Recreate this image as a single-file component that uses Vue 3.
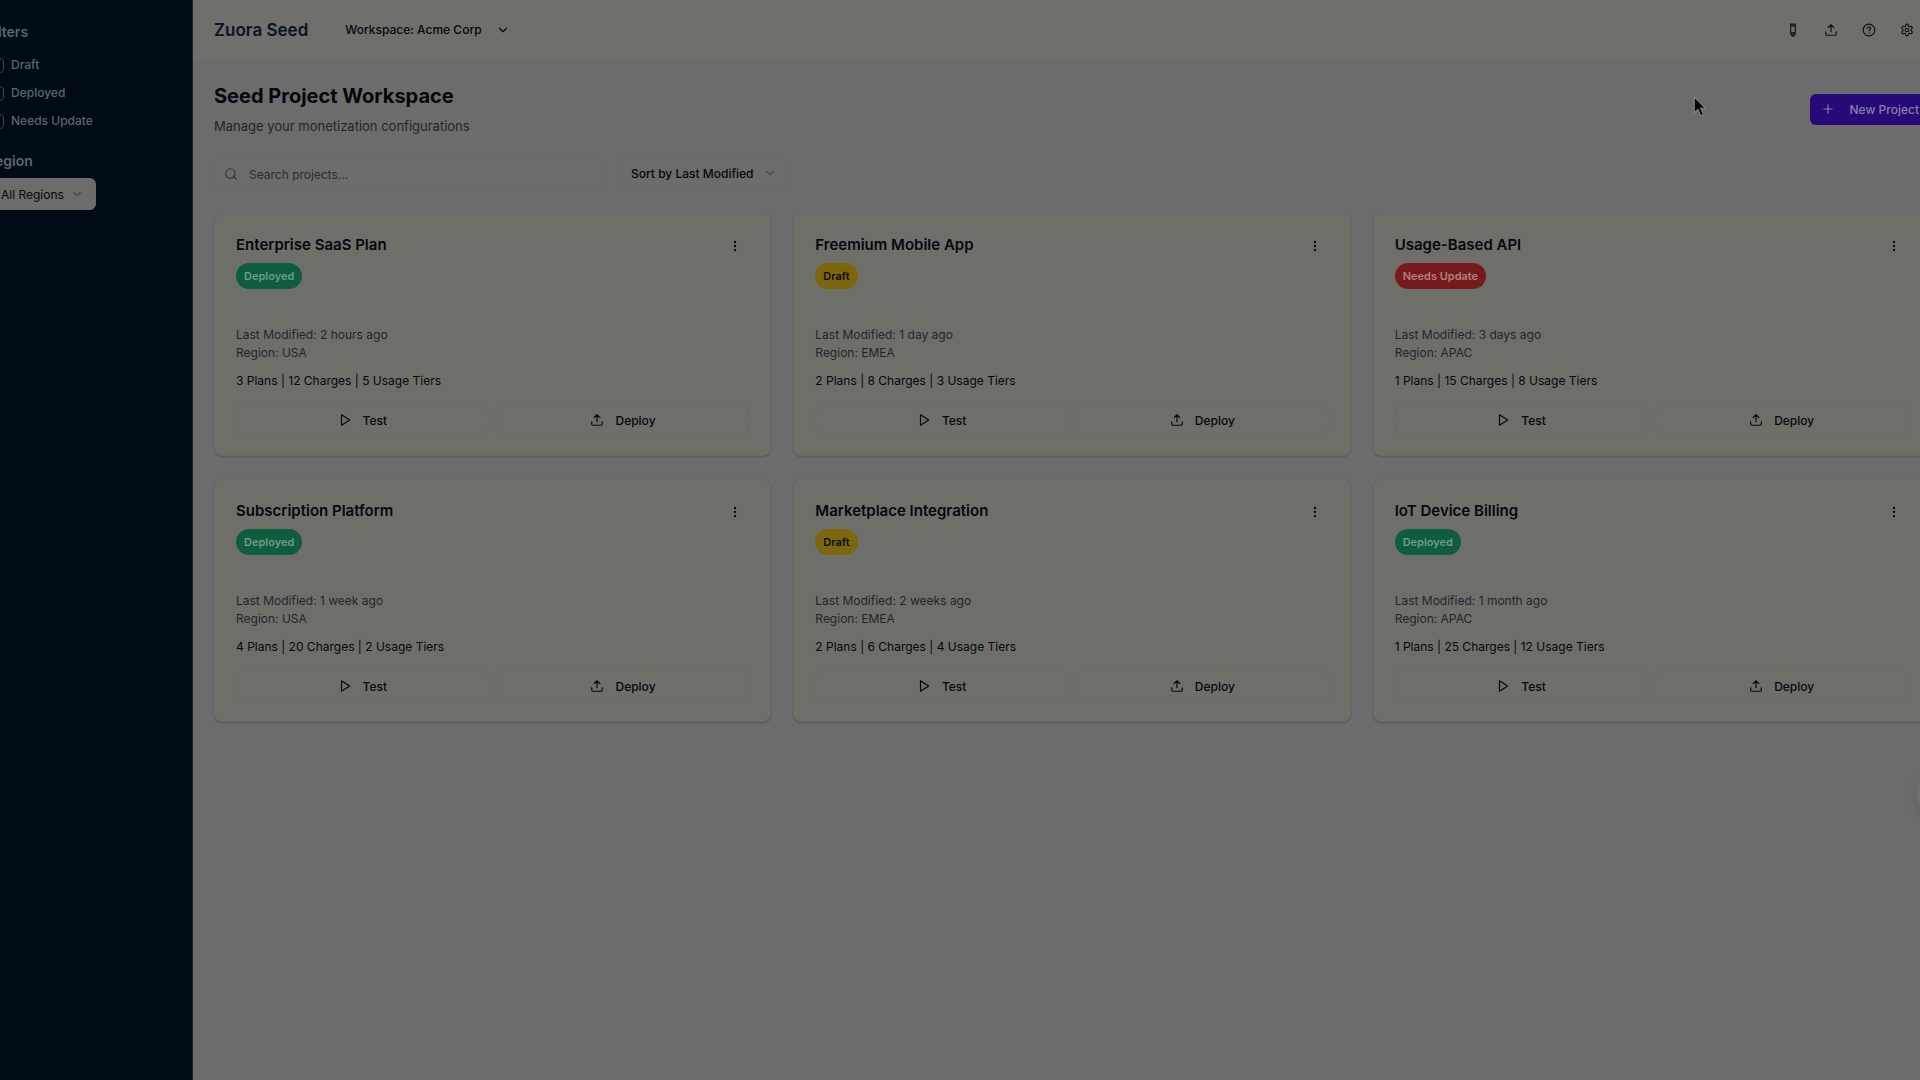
<script setup>
import { ref, computed } from "vue";

const statuses = ["Draft", "Deployed", "Needs Update"];
const checked = ref([]);
const region = ref("All Regions");
const sort = ref("Sort by Last Modified");
const search = ref("");

const projects = [
  { name: "Enterprise SaaS Plan", status: "Deployed", modified: "2 hours ago", region: "USA", plans: 3, charges: 12, tiers: 5 },
  { name: "Freemium Mobile App", status: "Draft", modified: "1 day ago", region: "EMEA", plans: 2, charges: 8, tiers: 3 },
  { name: "Usage-Based API", status: "Needs Update", modified: "3 days ago", region: "APAC", plans: 1, charges: 15, tiers: 8 },
  { name: "Subscription Platform", status: "Deployed", modified: "1 week ago", region: "USA", plans: 4, charges: 20, tiers: 2 },
  { name: "Marketplace Integration", status: "Draft", modified: "2 weeks ago", region: "EMEA", plans: 2, charges: 6, tiers: 4 },
  { name: "IoT Device Billing", status: "Deployed", modified: "1 month ago", region: "APAC", plans: 1, charges: 25, tiers: 12 },
];

const visible = computed(() =>
  projects.filter(
    (p) =>
      (!checked.value.length || checked.value.includes(p.status)) &&
      (region.value === "All Regions" || p.region === region.value) &&
      p.name.toLowerCase().includes(search.value.toLowerCase()),
  ),
);

const badgeClass = (status) => status.toLowerCase().replace(" ", "-");
</script>

<template>
  <div class="viewport">
    <div class="shell">
      <aside class="sidebar">
        <h2>Filters</h2>
        <div class="checks">
          <label v-for="s in statuses" :key="s">
            <input v-model="checked" type="checkbox" :value="s" />
            {{ s }}
          </label>
        </div>
        <label class="region-label" for="region">Region</label>
        <div class="select region-select">
          <select id="region" v-model="region">
            <option>All Regions</option>
            <option>USA</option>
            <option>EMEA</option>
            <option>APAC</option>
          </select>
          <svg class="icon chevron" viewBox="0 0 24 24"><path d="m6 9 6 6 6-6" /></svg>
        </div>
      </aside>

      <div class="main">
        <header class="topbar">
          <span class="brand">Zuora Seed</span>
          <button class="workspace">
            Workspace: Acme Corp
            <svg class="icon" viewBox="0 0 24 24"><path d="m6 9 6 6 6-6" /></svg>
          </button>
          <nav class="tools">
            <button aria-label="Edit">
              <svg class="icon" viewBox="0 0 24 24">
                <path d="M8 2h8v16l-2 4h-4l-2-4zM8 5h8M8 17h8M12 18v3" />
              </svg>
            </button>
            <button aria-label="Upload">
              <svg class="icon" viewBox="0 0 24 24">
                <path d="M21 15v4a2 2 0 0 1-2 2H5a2 2 0 0 1-2-2v-4M17 8l-5-5-5 5M12 3v12" />
              </svg>
            </button>
            <button aria-label="Help">
              <svg class="icon" viewBox="0 0 24 24">
                <circle cx="12" cy="12" r="10" />
                <path d="M9.1 9a3 3 0 0 1 5.8 1c0 2-3 3-3 3M12 17h.01" />
              </svg>
            </button>
            <button aria-label="Settings">
              <svg class="icon" viewBox="0 0 24 24">
                <path
                  d="M12.22 2h-.44a2 2 0 0 0-2 2v.18a2 2 0 0 1-1 1.73l-.43.25a2 2 0 0 1-2 0l-.15-.08a2 2 0 0 0-2.73.73l-.22.38a2 2 0 0 0 .73 2.73l.15.1a2 2 0 0 1 1 1.72v.51a2 2 0 0 1-1 1.74l-.15.09a2 2 0 0 0-.73 2.73l.22.38a2 2 0 0 0 2.73.73l.15-.08a2 2 0 0 1 2 0l.43.25a2 2 0 0 1 1 1.73V20a2 2 0 0 0 2 2h.44a2 2 0 0 0 2-2v-.18a2 2 0 0 1 1-1.73l.43-.25a2 2 0 0 1 2 0l.15.08a2 2 0 0 0 2.73-.73l.22-.39a2 2 0 0 0-.73-2.73l-.15-.08a2 2 0 0 1-1-1.74v-.5a2 2 0 0 1 1-1.74l.15-.09a2 2 0 0 0 .73-2.73l-.22-.38a2 2 0 0 0-2.73-.73l-.15.08a2 2 0 0 1-2 0l-.43-.25a2 2 0 0 1-1-1.73V4a2 2 0 0 0-2-2z"
                />
                <circle cx="12" cy="12" r="3" />
              </svg>
            </button>
          </nav>
        </header>

        <main class="content">
          <div class="page-head">
            <div>
              <h1>Seed Project Workspace</h1>
              <p>Manage your monetization configurations</p>
            </div>
            <button class="primary">
              <svg class="icon" viewBox="0 0 24 24"><path d="M5 12h14M12 5v14" /></svg>
              New Project
            </button>
          </div>

          <div class="controls">
            <div class="search">
              <svg class="icon" viewBox="0 0 24 24">
                <circle cx="11" cy="11" r="8" />
                <path d="m21 21-4.3-4.3" />
              </svg>
              <input v-model="search" type="text" placeholder="Search projects..." aria-label="Search projects" />
            </div>
            <div class="select sort-select">
              <select v-model="sort" aria-label="Sort projects">
                <option>Sort by Last Modified</option>
                <option>Sort by Name</option>
              </select>
              <svg class="icon chevron" viewBox="0 0 24 24"><path d="m6 9 6 6 6-6" /></svg>
            </div>
          </div>

          <div class="grid">
            <article v-for="p in visible" :key="p.name" class="card">
              <div class="card-head">
                <div>
                  <h3>{{ p.name }}</h3>
                  <span class="badge" :class="badgeClass(p.status)">{{ p.status }}</span>
                </div>
                <button class="more" aria-label="More actions">
                  <svg class="icon" viewBox="0 0 24 24">
                    <circle cx="12" cy="12" r="1" />
                    <circle cx="12" cy="5" r="1" />
                    <circle cx="12" cy="19" r="1" />
                  </svg>
                </button>
              </div>
              <p class="meta">Last Modified: {{ p.modified }}<br />Region: {{ p.region }}</p>
              <p class="stats">{{ p.plans }} Plans | {{ p.charges }} Charges | {{ p.tiers }} Usage Tiers</p>
              <div class="actions">
                <button>
                  <svg class="icon" viewBox="0 0 24 24"><path d="m6 3 14 9-14 9z" /></svg>
                  Test
                </button>
                <button>
                  <svg class="icon" viewBox="0 0 24 24">
                    <path d="M21 15v4a2 2 0 0 1-2 2H5a2 2 0 0 1-2-2v-4M17 8l-5-5-5 5M12 3v12" />
                  </svg>
                  Deploy
                </button>
              </div>
            </article>
          </div>
        </main>
      </div>
    </div>

    <svg class="pointer" viewBox="0 0 12 20">
      <path d="M1 1v15l3.5-3.3 2.7 6 2.6-1.2-2.7-5.8H12z" />
    </svg>
    <!-- floating action, mostly past the right edge -->
    <button class="floating" aria-label="Assistant"></button>
  </div>
</template>

<style>
body {
  margin: 0;
  background: #6c6c6c;
}
</style>

<style scoped>
.viewport {
  position: relative;
  min-height: 100vh;
  overflow: hidden;
  font-family: Inter, "Liberation Sans", sans-serif;
  font-size: 12px;
  color: #04070d;
}

/* The shell is wider than the window and runs off both sides. */
.shell {
  display: flex;
  min-height: 100vh;
  margin: 0 -31px 0 -32px;
}

* {
  box-sizing: border-box;
}

h1,
h2,
h3,
p {
  margin: 0;
}

button,
input,
select {
  font: inherit;
  color: inherit;
}

button {
  display: flex;
  align-items: center;
  justify-content: center;
  padding: 0;
  border: 0;
  background: transparent;
  font-weight: 500;
  cursor: pointer;
}

.icon {
  flex: none;
  width: 14px;
  height: 14px;
  fill: none;
  stroke: currentColor;
  stroke-width: 2;
  stroke-linecap: round;
  stroke-linejoin: round;
}

.sidebar {
  flex: none;
  width: 225px;
  padding: 22px 18px;
  background: #000a14;
  border-right: 1px solid #1c222a;
  color: #5b6672;
}

.sidebar h2,
.region-label {
  display: block;
  font-size: 14px;
  line-height: 20px;
  font-weight: 600;
}

.checks {
  display: flex;
  flex-direction: column;
  gap: 8px;
  padding: 13px 0 20px 3px;
}

.checks label {
  display: flex;
  align-items: center;
  gap: 7px;
  line-height: 20px;
  font-weight: 500;
}

.checks input {
  appearance: none;
  width: 15px;
  height: 15px;
  margin: 0;
  border: 1px solid #3d4853;
  border-radius: 4px;
}

.checks input:checked {
  background: #3d4853;
}

.select {
  position: relative;
}

.select select {
  appearance: none;
  width: 100%;
  height: 32px;
  padding: 0 12px;
  border: 1px solid #686868;
  border-radius: 6px;
  background: transparent;
  color: #04070d;
  font-weight: 500;
}

.chevron {
  position: absolute;
  right: 12px;
  top: 9px;
  color: #4a4a4a;
  pointer-events: none;
}

.region-select {
  width: 110px;
  margin-top: 7px;
}

.region-select select {
  padding-left: 14px;
  background: #6c6c6a;
  font-weight: 400;
}

.main {
  flex: 1;
  min-width: 0;
}

.topbar {
  display: flex;
  align-items: center;
  height: 60px;
  padding: 0 29px 0 21px;
  background: #6f6f6b;
  border-bottom: 1px solid #6a6a6a;
}

.brand {
  font-size: 17px;
  font-weight: 600;
  color: #0a1420;
}

.workspace {
  gap: 14px;
  height: 32px;
  margin-left: 24px;
  padding: 0 12px;
  border: 1px solid #6b6b68;
  border-radius: 6px;
}

.tools {
  display: flex;
  gap: 7px;
  margin-left: auto;
  color: #0f141a;
}

.tools button {
  width: 31px;
  height: 31px;
}

.content {
  padding: 22px 21px;
}

.page-head {
  display: flex;
  align-items: center;
  justify-content: space-between;
}

h1 {
  font-size: 20px;
  line-height: 28px;
  font-weight: 700;
}

.page-head p {
  padding-top: 6px;
  font-size: 13px;
  line-height: 20px;
  color: #1f252d;
}

.primary {
  gap: 14px;
  height: 31px;
  padding: 0 11px;
  border-radius: 6px;
  background: #260a78;
  color: #8583a0;
}

.controls {
  display: flex;
  gap: 14px;
  padding: 21px 0 22px;
}

.search {
  display: flex;
  align-items: center;
  gap: 11px;
  width: 390px;
  height: 34px;
  padding: 0 9px;
  border: 1px solid #696969;
  border-radius: 6px;
  color: #363636;
}

.search input {
  flex: 1;
  min-width: 0;
  padding: 0;
  border: 0;
  outline: 0;
  background: transparent;
  color: #04070d;
}

.search input::placeholder {
  color: #2c2d30;
}

.sort-select {
  width: 168px;
}

.sort-select .chevron {
  right: 9px;
}

.grid {
  display: grid;
  grid-template-columns: repeat(3, 1fr);
  gap: 23px 22px;
}

.card {
  padding: 21px 21px 20px;
  border: 1px solid #696968;
  border-radius: 8px;
  background: #6f6f6a;
  box-shadow: 0 1px 2px rgba(0, 0, 0, 0.2);
}

.card-head {
  display: flex;
  justify-content: space-between;
  height: 91px;
}

h3 {
  font-size: 15px;
  line-height: 20px;
  font-weight: 600;
}

.badge {
  display: inline-block;
  margin-top: 8px;
  padding: 0 8px;
  border-radius: 13px;
  font-size: 11px;
  line-height: 26px;
  font-weight: 600;
}

.deployed {
  background: #0f5c3f;
  color: #6a9c86;
}

.draft {
  background: #7d670e;
  color: #0b0a04;
}

.needs-update {
  background: #761a1c;
  color: #b08081;
}

.more {
  width: 28px;
  height: 22px;
}

.meta {
  line-height: 18px;
  color: #1f252d;
}

.stats {
  padding: 10px 0 15px;
  line-height: 18px;
}

.actions {
  display: flex;
  gap: 8px;
}

.actions button {
  flex: 1;
  gap: 11px;
  height: 30px;
  border: 1px solid #6a6a67;
  border-radius: 6px;
}

.pointer {
  position: absolute;
  left: 1693px;
  top: 96px;
  width: 13px;
  height: 21px;
  fill: #060606;
  stroke: #85858f;
  stroke-width: 1;
}

.floating {
  position: absolute;
  right: -45px;
  top: 770px;
  width: 48px;
  height: 48px;
  border-radius: 50%;
  background: #707070;
  box-shadow: 0 3px 14px rgba(0, 0, 0, 0.1);
}
</style>
